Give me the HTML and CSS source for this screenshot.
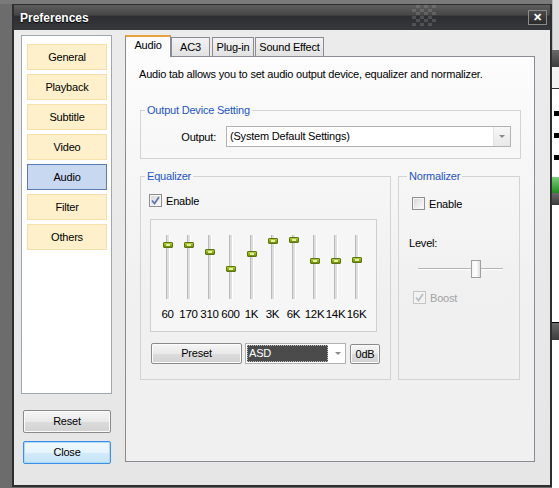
FILE: index.html
```html
<!DOCTYPE html>
<html lang="en">
<head>
    <meta charset="UTF-8">
    <meta name="viewport" content="width=device-width, initial-scale=1.0">
    <title>Preferences</title>
    <link rel="stylesheet" href="styles.css">
</head>
<body>
    <div class="screen">
        <div class="backdrop-left"></div>

        <div class="window">
            <div class="titlebar">
                <span class="title">Preferences</span>
                <span class="grip"></span>
                <span class="close-btn">✕</span>
            </div>

            <div class="client">
                <!-- category list -->
                <div class="nav-col">
                    <div class="nav-box">
                        <div class="nav-btn">General</div>
                        <div class="nav-btn">Playback</div>
                        <div class="nav-btn">Subtitle</div>
                        <div class="nav-btn">Video</div>
                        <div class="nav-btn active">Audio</div>
                        <div class="nav-btn">Filter</div>
                        <div class="nav-btn">Others</div>
                    </div>
                    <div class="push-btn reset-btn">Reset</div>
                    <div class="push-btn close-dialog">Close</div>
                </div>

                <!-- tabs -->
                <div class="tabs-col">
                    <div class="tab-strip">
                        <div class="tab active">Audio</div>
                        <div class="tab tab-ac3">AC3</div>
                        <div class="tab tab-plugin">Plug-in</div>
                        <div class="tab tab-sound">Sound Effect</div>
                    </div>

                    <div class="tab-page">
                        <p class="intro">Audio tab allows you to set audio output device, equalizer and normalizer.</p>

                        <fieldset class="group output-group">
                            <legend>Output Device Setting</legend>
                            <div class="output-row">
                                <span class="output-label">Output:</span>
                                <div class="combo output-combo">
                                    <span class="combo-text">(System Default Settings)</span>
                                    <span class="combo-arrow"></span>
                                </div>
                            </div>
                        </fieldset>

                        <div class="group-row">
                            <fieldset class="group eq-group">
                                <legend>Equalizer</legend>
                                <div class="check-row eq-check">
                                    <span class="checkbox">
                                        <svg viewBox="0 0 13 13" width="13" height="13"><path d="M3 6.5 L5.5 9.5 L10 3" fill="none" stroke="#5d74b0" stroke-width="1.7"/></svg>
                                    </span>
                                    <span>Enable</span>
                                </div>

                                <div class="eq-box">
                                    <div class="band"><div class="band-track"><span class="band-thumb" style="top:7px"></span></div><span class="band-label">60</span></div>
                                    <div class="band"><div class="band-track"><span class="band-thumb" style="top:7px"></span></div><span class="band-label">170</span></div>
                                    <div class="band"><div class="band-track"><span class="band-thumb" style="top:14px"></span></div><span class="band-label">310</span></div>
                                    <div class="band"><div class="band-track"><span class="band-thumb" style="top:31px"></span></div><span class="band-label">600</span></div>
                                    <div class="band"><div class="band-track"><span class="band-thumb" style="top:16px"></span></div><span class="band-label">1K</span></div>
                                    <div class="band"><div class="band-track"><span class="band-thumb" style="top:3px"></span></div><span class="band-label">3K</span></div>
                                    <div class="band"><div class="band-track"><span class="band-thumb" style="top:2px"></span></div><span class="band-label">6K</span></div>
                                    <div class="band"><div class="band-track"><span class="band-thumb" style="top:23px"></span></div><span class="band-label">12K</span></div>
                                    <div class="band"><div class="band-track"><span class="band-thumb" style="top:23px"></span></div><span class="band-label">14K</span></div>
                                    <div class="band"><div class="band-track"><span class="band-thumb" style="top:22px"></span></div><span class="band-label">16K</span></div>
                                </div>

                                <div class="preset-row">
                                    <div class="push-btn preset-btn">Preset</div>
                                    <div class="combo preset-combo">
                                        <span class="combo-text selected">ASD</span>
                                        <span class="combo-arrow"></span>
                                    </div>
                                    <div class="push-btn zero-btn">0dB</div>
                                </div>
                            </fieldset>

                            <fieldset class="group norm-group">
                                <legend>Normalizer</legend>
                                <div class="check-row norm-check">
                                    <span class="checkbox"></span>
                                    <span>Enable</span>
                                </div>
                                <div class="level-label">Level:</div>
                                <div class="h-slider">
                                    <span class="h-thumb"></span>
                                </div>
                                <div class="check-row boost-check disabled">
                                    <span class="checkbox">
                                        <svg viewBox="0 0 13 13" width="13" height="13"><path d="M3 6.5 L5.5 9.5 L10 3" fill="none" stroke="#b9bdc6" stroke-width="1.7"/></svg>
                                    </span>
                                    <span>Boost</span>
                                </div>
                            </fieldset>
                        </div>
                    </div>
                </div>
            </div>
        </div>

        <!-- bits of the window behind -->
        <div class="backdrop-right">
            <div class="bg-top"></div>
            <div class="bg-bar"></div>
            <div class="bg-light"></div>
            <div class="bg-white">
                <span class="bg-mark"></span>
                <span class="bg-mark"></span>
                <span class="bg-mark"></span>
            </div>
            <div class="bg-green"></div>
            <div class="bg-bar small"></div>
            <div class="bg-white tall"></div>
            <div class="bg-bar"></div>
            <div class="bg-white rest"></div>
        </div>
    </div>
</body>
</html>
```

FILE: styles.css
```css
* {
    box-sizing: border-box;
}

body {
    margin: 0;
    background-color: #6c6c6c;
    font-family: "Liberation Sans", Arial, sans-serif;
    font-size: 11px;
    letter-spacing: -0.2px;
    color: #000;
}

.screen {
    display: flex;
    width: 559px;
    height: 488px;
    overflow: hidden;
    background: linear-gradient(#7a7a7a 0, #7a7a7a 4px, #6c6c6c 4px);
}

.backdrop-left {
    width: 12px;
    flex-shrink: 0;
}

/* window frame */

.window {
    width: 540px;
    height: 483px;
    margin-top: 4px;
    flex-shrink: 0;
    border: 2px solid #2d2e30;
    border-top-width: 1px;
    background: linear-gradient(#ececec, #e6e6e6);
    display: flex;
    flex-direction: column;
}

.titlebar {
    height: 25px;
    display: flex;
    align-items: center;
    padding-left: 6px;
    background: linear-gradient(#5d5d5d, #474747 40%, #2c2e32 45%, #37383b);
}

.title {
    color: #fff;
    font-weight: bold;
    font-size: 12px;
    letter-spacing: 0;
    text-shadow: 0 1px 1px #000;
}

.grip {
    align-self: flex-start;
    width: 24px;
    height: 21px;
    margin-left: auto;
    margin-right: 92px;
    opacity: 0.3;
    background: repeating-conic-gradient(#9a9a9a 0 25%, transparent 0 50%);
    background-size: 8px 7px;
}

.close-btn {
    width: 19px;
    height: 15px;
    margin-right: 3px;
    border: 1px solid #8b8b8b;
    background: linear-gradient(#4a4a4a, #2b2b2b);
    color: #fff;
    font-size: 11px;
    font-weight: bold;
    line-height: 13px;
    text-align: center;
}

.client {
    flex: 1;
    display: flex;
    padding: 5px 14px 0 7px;
}

/* category list */

.nav-col {
    width: 91px;
    display: flex;
    flex-direction: column;
}

.nav-box {
    height: 359px;
    background: #fff;
    border: 1px solid #9ea7b3;
    padding: 8px 4px 0 5px;
}

.nav-btn {
    height: 26px;
    margin-bottom: 4px;
    background: #fdf0cb;
    border: 1px solid #f4e0a9;
    text-align: center;
    line-height: 24px;
}

.nav-btn.active {
    background: #c8d8f1;
    border-color: #5a7cb3;
}

.push-btn {
    height: 23px;
    border: 1px solid #8a8a8a;
    border-radius: 2px;
    background: linear-gradient(#f6f6f6, #e9e9e9 50%, #dcdcdc 51%, #d2d2d2);
    box-shadow: inset 0 0 0 1px #fbfbfb;
    text-align: center;
    line-height: 21px;
}

.reset-btn {
    width: 88px;
    margin: 16px 0 0 2px;
}

.close-dialog {
    width: 88px;
    margin: 8px 0 0 2px;
    border-color: #3d8ee6;
    box-shadow: inset 0 0 0 1px #a9dcf8;
    background: linear-gradient(#f2f9fe, #e5f3fc 50%, #d3ebfa 51%, #c6e4f8);
}

/* tabs */

.tabs-col {
    width: 410px;
    margin-left: 13px;
    display: flex;
    flex-direction: column;
}

.tab-strip {
    height: 21px;
    display: flex;
    align-items: flex-end;
}

.tab {
    height: 19px;
    border: 1px solid #898c95;
    border-bottom: none;
    background: linear-gradient(#f3f3f3, #e2e2e2);
    text-align: center;
    line-height: 18px;
}

.tab.active {
    width: 46px;
    height: 22px;
    margin-bottom: -1px;
    position: relative;
    border-top: 2px solid #eaa33c;
    background: #fcfcfc;
    line-height: 17px;
}

.tab-ac3 {
    width: 39px;
}

.tab-plugin {
    width: 42px;
    margin-left: 2px;
}

.tab-sound {
    width: 69px;
    margin-left: 1px;
}

.tab-page {
    height: 406px;
    border: 1px solid #898c95;
    background: linear-gradient(#fcfcfc, #f0f0f0 60%);
    padding: 11px 13px 0 14px;
}

.intro {
    margin: 0 0 0 -1px;
    line-height: 13px;
}

/* group boxes */

.group {
    margin: 0;
    padding: 0;
    min-width: 0;
    border: 1px solid #d3d3d3;
}

.group legend {
    margin-left: 4px;
    padding: 0 2px;
    color: #1d54c8;
    line-height: 13px;
}

.output-group {
    margin-top: 23px;
    height: 55px;
}

.output-row {
    display: flex;
    align-items: center;
    padding: 9px 8px 0 0;
}

.output-label {
    width: 75px;
    text-align: right;
}

.combo {
    height: 21px;
    display: flex;
    border: 1px solid #b2b2b2;
    background: #fff;
}

.output-combo {
    width: 285px;
    margin-left: 10px;
}

.combo-text {
    flex: 1;
    padding-left: 3px;
    line-height: 19px;
}

.combo-arrow {
    width: 17px;
    border-left: 1px solid #e2e2e2;
    background: linear-gradient(#f7f7f7, #e8e8e8);
    position: relative;
}

.combo-arrow::after {
    content: "";
    position: absolute;
    left: 5px;
    top: 8px;
    border-left: 3px solid transparent;
    border-right: 3px solid transparent;
    border-top: 3px solid #8a8a8a;
}

.group-row {
    display: flex;
    gap: 7px;
    margin-top: 11px;
}

.check-row {
    display: flex;
    align-items: center;
    gap: 4px;
    height: 13px;
}

.checkbox {
    width: 13px;
    height: 13px;
    border: 1px solid #8f8f8f;
    background: linear-gradient(135deg, #d6d6d6, #fdfdfd);
    box-shadow: inset 0 0 0 1px #f4f4f4;
    position: relative;
}

.checkbox svg {
    position: absolute;
    left: -1px;
    top: -1px;
}

.check-row.disabled {
    color: #a3a3a3;
}

.check-row.disabled .checkbox {
    border-color: #c4c4c4;
    background: #f2f2f2;
}

/* equalizer */

.eq-group {
    width: 251px;
    height: 210px;
    padding-left: 8px;
}

.eq-group legend {
    margin-left: -4px;
}

.eq-check {
    margin-top: 11px;
}

.eq-box {
    width: 227px;
    height: 113px;
    margin: 12px 0 0 1px;
    border: 1px solid #cfcfcf;
    background: #f6f6f6;
    display: flex;
    padding: 15px 0 0 6px;
}

.band {
    width: 21px;
    display: flex;
    flex-direction: column;
    align-items: center;
}

.band-track {
    width: 4px;
    height: 64px;
    position: relative;
    border-left: 1px solid #b9b9b9;
    border-right: 1px solid #fff;
    background: #dedede;
}

.band-thumb {
    position: absolute;
    left: -4px;
    width: 10px;
    height: 6px;
    border: 1px solid #5e7410;
    border-radius: 1px;
    background: linear-gradient(#b6d23c, #8dad18 50%, #6f8c0c);
}

.band-thumb::after {
    content: "";
    position: absolute;
    left: 2px;
    top: 1px;
    width: 4px;
    height: 2px;
    background: #e3f29a;
}

.band-label {
    margin-top: 9px;
    line-height: 13px;
    font-size: 11.5px;
    letter-spacing: -0.3px;
    white-space: nowrap;
}

.preset-row {
    display: flex;
    align-items: flex-start;
    margin-top: 11px;
}

.preset-btn {
    width: 91px;
    height: 21px;
    line-height: 19px;
    margin-left: 2px;
}

.preset-combo {
    width: 101px;
    margin-left: 3px;
    padding: 1px 0 1px 1px;
}

.combo-text.selected {
    background: #4b4b4b;
    color: #fff;
    outline: 1px dotted #c0c0c0;
    outline-offset: -1px;
    line-height: 17px;
    padding-left: 2px;
}

.preset-combo .combo-arrow {
    border-left: none;
    background: #fff;
}

.preset-combo .combo-arrow::after {
    top: 7px;
    left: 7px;
}

.zero-btn {
    width: 30px;
    height: 20px;
    line-height: 18px;
    margin-left: 4px;
    margin-top: 1px;
}

/* normalizer */

.norm-group {
    width: 122px;
    height: 210px;
    padding-left: 10px;
}

.norm-group legend {
    margin-left: -2px;
}

.norm-check {
    margin: 14px 0 0 3px;
}

.level-label {
    margin-top: 27px;
    line-height: 13px;
}

.h-slider {
    width: 85px;
    height: 18px;
    margin: 10px 0 0 9px;
    position: relative;
    background: linear-gradient(transparent 8px, #b4b4b4 8px, #b4b4b4 9px, #fff 9px, #fff 10px, transparent 10px);
}

.h-thumb {
    position: absolute;
    left: 53px;
    top: 0;
    width: 10px;
    height: 18px;
    border: 1px solid #a0a0a0;
    background: linear-gradient(90deg, #f4f4f4, #fff 50%, #dedede);
}

.boost-check {
    margin: 13px 0 0 4px;
}

/* window behind, on the right */

.backdrop-right {
    flex: 1;
    display: flex;
    flex-direction: column;
    background: #fff;
}

.bg-top {
    height: 50px;
    background: #dedede;
    border-left: 1px solid #bbb;
}

.bg-bar {
    height: 17px;
    background: linear-gradient(#6a6a6a, #3c3c3c);
}

.bg-bar.small {
    height: 12px;
}

.bg-light {
    height: 22px;
    background: #f2f2f2;
    border-bottom: 1px solid #333;
}

.bg-white {
    height: 88px;
    background: #fff;
    padding-top: 22px;
    display: flex;
    flex-direction: column;
    gap: 17px;
}

.bg-mark {
    width: 6px;
    height: 5px;
    margin-left: 2px;
    background: #000;
}

.bg-green {
    height: 16px;
    background: linear-gradient(#7ed07e, #1f8a1f);
}

.bg-white.tall {
    height: 118px;
    border-bottom: 1px solid #000;
}

.bg-white.rest {
    flex: 1;
}
```
